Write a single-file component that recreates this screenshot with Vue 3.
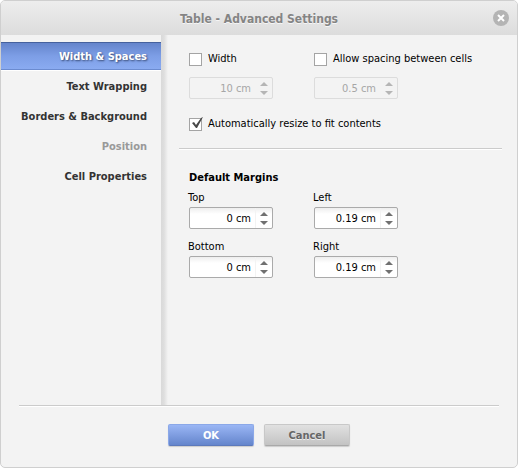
<script setup>
import { reactive, ref } from 'vue'

const tabs = [
  { id: 'width', label: 'Width & Spaces' },
  { id: 'wrap', label: 'Text Wrapping' },
  { id: 'borders', label: 'Borders & Background' },
  { id: 'position', label: 'Position', disabled: true },
  { id: 'cell', label: 'Cell Properties' },
]
const active = ref('width')

const sizes = reactive([
  { id: 'table-width', label: 'Width', on: false, value: 10, step: 1 },
  { id: 'spacing', label: 'Allow spacing between cells', on: false, value: 0.5, step: 0.1 },
])
const margins = reactive([
  { id: 'top', label: 'Top', value: 0 },
  { id: 'left', label: 'Left', value: 0.19 },
  { id: 'bottom', label: 'Bottom', value: 0 },
  { id: 'right', label: 'Right', value: 0.19 },
])
const autoFit = ref(true)

function bump(item, delta) {
  item.value = Math.max(0, Math.round((item.value + delta) * 100) / 100)
}
function parse(item, event) {
  const n = parseFloat(event.target.value)
  if (!Number.isNaN(n)) item.value = Math.max(0, n)
  event.target.value = `${item.value} cm`
}
</script>

<template>
  <section class="dialog" role="dialog" aria-labelledby="dialog-title">
    <header class="header">
      <h1 id="dialog-title">Table - Advanced Settings</h1>
      <button class="close" type="button" aria-label="Close">
        <svg viewBox="0 0 16 16" width="16" height="16" aria-hidden="true">
          <circle cx="8" cy="8" r="8" fill="#b4b4b4" />
          <path d="M5 5l6 6M11 5l-6 6" stroke="#fff" stroke-width="2" />
        </svg>
      </button>
    </header>

    <div class="body">
      <nav class="menu">
        <button
          v-for="tab in tabs"
          :key="tab.id"
          type="button"
          class="tab"
          :class="{ active: active === tab.id }"
          :disabled="tab.disabled"
          @click="active = tab.id"
        >{{ tab.label }}</button>
      </nav>

      <main class="panel">
        <div class="group">
          <div class="grid sizes">
            <div v-for="item in sizes" :key="item.id" class="size">
              <label class="check">
                <span class="box">
                  <input v-model="item.on" type="checkbox">
                  <svg v-if="item.on" class="tick" viewBox="0 0 15 15" width="15" height="15" aria-hidden="true">
                    <path d="M3 7l2-1 2 3 5-7 2-1-6 11H7z" fill="#484848" />
                  </svg>
                </span>
                {{ item.label }}
              </label>
              <div class="spinner" :class="{ off: !item.on }">
                <input :value="`${item.value} cm`" type="text" :aria-label="item.label" :disabled="!item.on" @change="parse(item, $event)">
                <span class="arrows">
                  <button type="button" aria-label="Increase" :disabled="!item.on" @click="bump(item, item.step)">
                    <svg viewBox="0 0 8 4" width="8" height="4" aria-hidden="true"><path d="M0 4l4-4 4 4z" /></svg>
                  </button>
                  <button type="button" aria-label="Decrease" :disabled="!item.on" @click="bump(item, -item.step)">
                    <svg viewBox="0 0 8 4" width="8" height="4" aria-hidden="true"><path d="M0 0h8l-4 4z" /></svg>
                  </button>
                </span>
              </div>
            </div>
          </div>
          <label class="check">
            <span class="box">
              <input v-model="autoFit" type="checkbox">
              <svg v-if="autoFit" class="tick" viewBox="0 0 15 15" width="15" height="15" aria-hidden="true">
                <path d="M3 7l2-1 2 3 5-7 2-1-6 11H7z" fill="#484848" />
              </svg>
            </span>
            Automatically resize to fit contents
          </label>
        </div>

        <div class="group margins">
          <h2>Default Margins</h2>
          <div class="grid fields">
            <div v-for="item in margins" :key="item.id" class="field">
              <label :for="item.id">{{ item.label }}</label>
              <div class="spinner">
                <input :id="item.id" :value="`${item.value} cm`" type="text" @change="parse(item, $event)">
                <span class="arrows">
                  <button type="button" aria-label="Increase" @click="bump(item, 0.1)">
                    <svg viewBox="0 0 8 4" width="8" height="4" aria-hidden="true"><path d="M0 4l4-4 4 4z" /></svg>
                  </button>
                  <button type="button" aria-label="Decrease" @click="bump(item, -0.1)">
                    <svg viewBox="0 0 8 4" width="8" height="4" aria-hidden="true"><path d="M0 0h8l-4 4z" /></svg>
                  </button>
                </span>
              </div>
            </div>
          </div>
        </div>
      </main>
    </div>

    <footer class="footer">
      <button class="action primary" type="button">OK</button>
      <button class="action" type="button">Cancel</button>
    </footer>
  </section>
</template>

<style>
body {
  background: #fff;
}
</style>

<style scoped>
.dialog,
.dialog * {
  box-sizing: border-box;
}
.dialog {
  display: flex;
  flex-direction: column;
  min-height: 100vh;
  border: 1px solid #cfcfcf;
  border-radius: 5px;
  background: #f3f3f3;
  color: #000;
  font: 11px/14px "DejaVu Sans Condensed", "Open Sans", sans-serif;
}
button,
input {
  margin: 0;
  padding: 0;
  border: 0;
  background: none;
  font: inherit;
  color: inherit;
}
.header {
  display: flex;
  align-items: center;
  height: 34px;
  padding: 0 8px 0 24px;
  border-radius: 4px 4px 0 0;
  background: linear-gradient(#ededed, #dcdcdc);
}
h1 {
  flex: 1;
  margin: 0;
  padding-top: 2px;
  font-size: 12px;
  line-height: 16px;
  font-weight: bold;
  text-align: center;
  color: #848484;
  text-shadow: 0 1px 0 #f6f6f6;
}
.close {
  width: 16px;
  height: 16px;
}
.close svg {
  display: block;
}
.body {
  flex: 1;
  display: flex;
}
.menu {
  display: flex;
  flex-direction: column;
  gap: 2px;
  width: 160px;
  padding-top: 7px;
}
.tab {
  height: 28px;
  padding: 1px 14px 0 0;
  font-weight: bold;
  text-align: right;
  color: #333;
}
.tab:disabled {
  color: #999;
}
.tab.active {
  border-top: 1px solid #45619d;
  border-bottom: 1px solid #6b8bd0;
  background: linear-gradient(#6484cb, #7d9ee6 50%, #8aabf1);
  box-shadow: 0 1px 0 #fff;
  color: #fff;
  text-shadow: 1px 1px 2px #34466f;
}
.panel {
  flex: 1;
  padding: 0 15px 0 18px;
  background: linear-gradient(90deg, #d9d9d9, #dedede 3px, #f3f3f3 7px) no-repeat left / 7px 100%;
}
.group {
  padding: 17px 0 17px 10px;
  border-bottom: 1px solid #cbcbcb;
  box-shadow: 0 1px 0 #fff;
}
.margins {
  padding-top: 22px;
  border: 0;
  box-shadow: none;
}
.grid {
  display: grid;
  grid-template-columns: 125px 1fr;
}
.sizes {
  margin-bottom: 18px;
}
.size {
  display: grid;
  gap: 11px;
}
.check {
  display: flex;
  align-items: center;
  gap: 6px;
  white-space: nowrap;
}
.box {
  position: relative;
  width: 13px;
  height: 13px;
}
.box input {
  display: block;
  width: 13px;
  height: 13px;
  appearance: none;
  border: 1px solid #a4a4a4;
  background: #fff;
}
.tick {
  position: absolute;
  left: 0;
  top: -2px;
  pointer-events: none;
}
.spinner {
  display: flex;
  width: 84px;
  height: 22px;
  border: 1px solid #aaa;
  border-radius: 2px;
  background: linear-gradient(#eee, #fff 6px);
}
.spinner input {
  flex: 1;
  min-width: 0;
  padding: 2px 4px 0 0;
  text-align: right;
}
.arrows {
  display: flex;
  flex-direction: column;
  width: 17px;
  padding: 1px 1px 1px 0;
  border-left: 1px solid #f3f3f3;
}
.arrows button {
  flex: 1;
  display: flex;
  align-items: center;
  justify-content: center;
  fill: #707070;
}
.spinner.off {
  border-color: #dcdcdc;
  background: #f3f3f3;
  color: #a6a6a6;
}
.off .arrows button {
  fill: #b5b5b5;
}
h2 {
  margin: 0 0 6px;
  font-size: 11px;
  line-height: 14px;
  font-weight: bold;
}
.fields {
  row-gap: 11px;
}
.field label {
  display: block;
  margin: 0 0 2px -1px;
  line-height: 14px;
}
.footer {
  display: flex;
  justify-content: center;
  gap: 10px;
  margin: 0 18px;
  padding: 18px 0 21px;
  border-top: 1px solid #cbcbcb;
  box-shadow: inset 0 1px 0 #fff;
}
.action {
  width: 86px;
  height: 22px;
  padding-top: 2px;
  border: 1px solid #c8c8c8;
  border-bottom-color: #a9a9a9;
  border-radius: 2px;
  background: linear-gradient(#e1e1e1, #c3c3c3);
  box-shadow: 0 1px 1px #ccc;
  font-weight: bold;
  color: #666;
  text-shadow: 0 1px 0 #eee;
}
.primary {
  border-color: #8ba8e8;
  border-bottom-color: #5c79bb;
  background: linear-gradient(#9ab6f5, #6485cc);
  color: #fff;
  text-shadow: none;
}
</style>
